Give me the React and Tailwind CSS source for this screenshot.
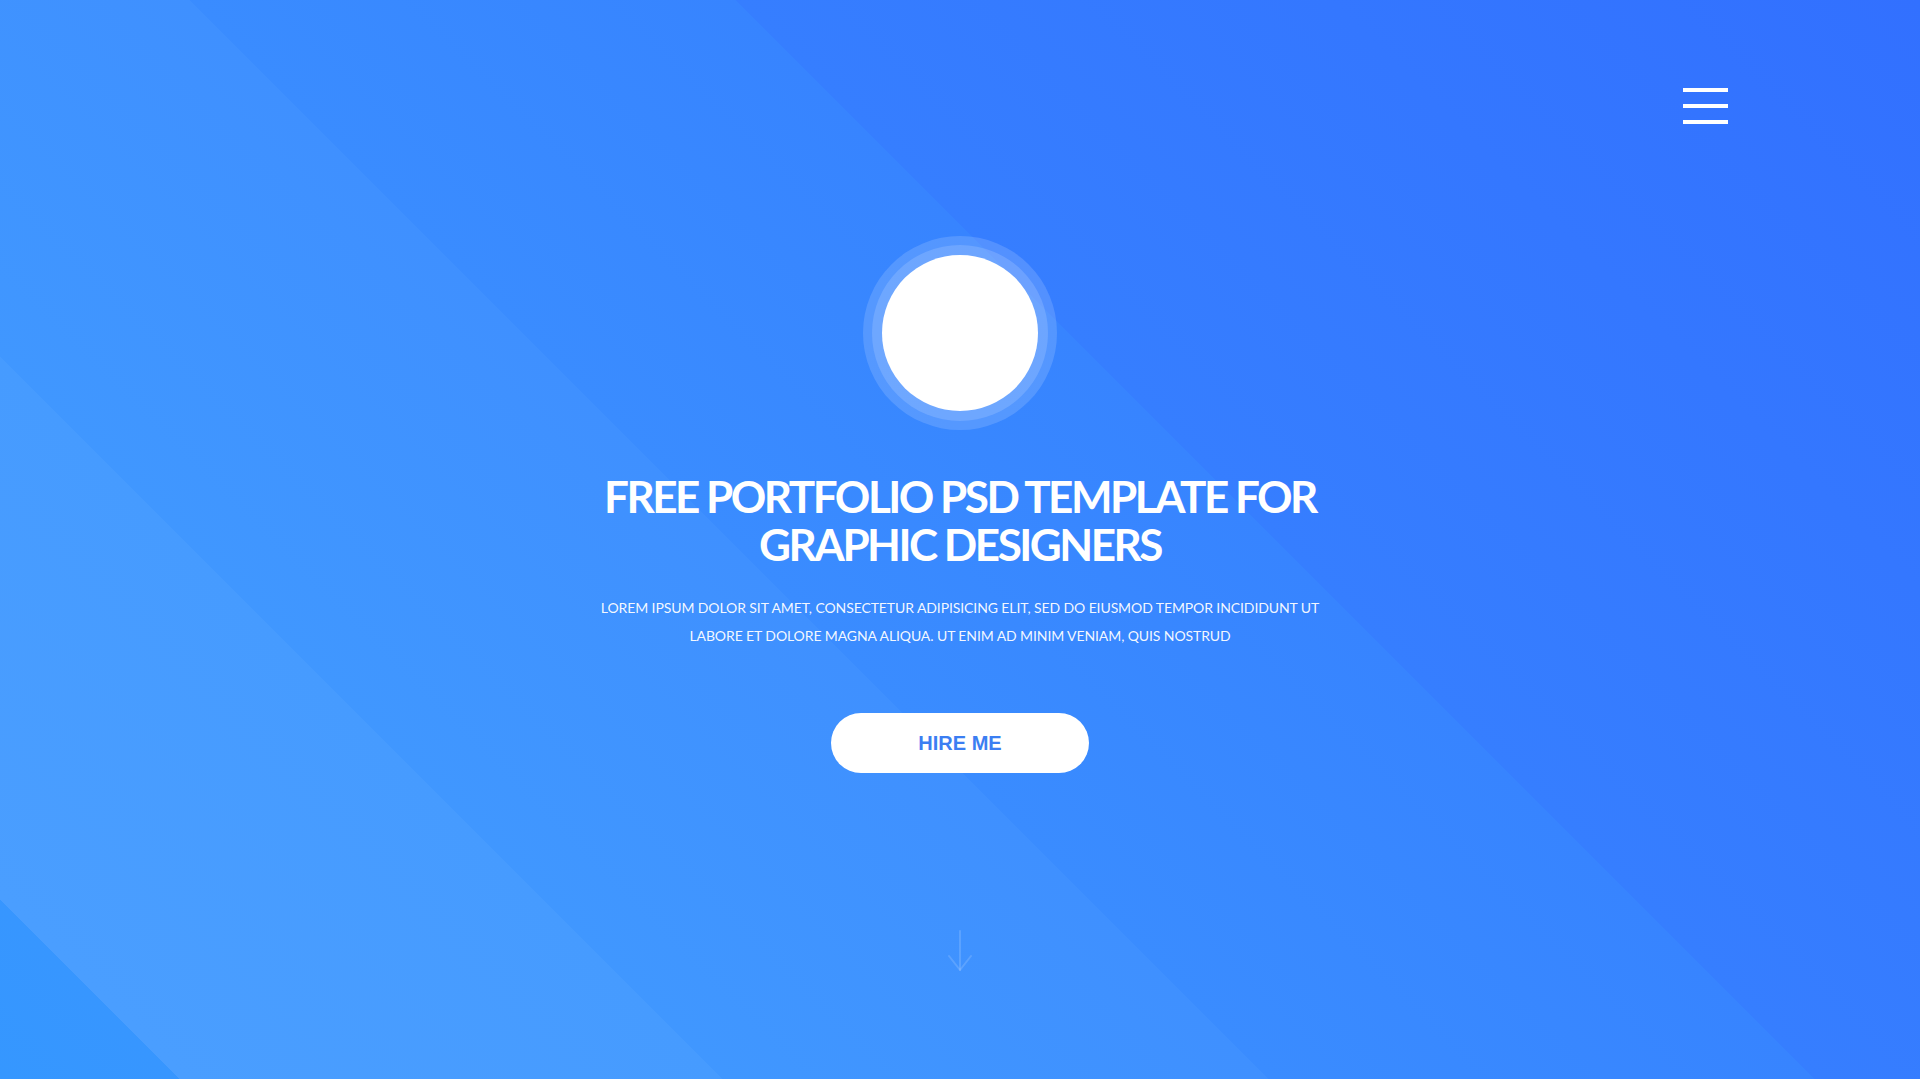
import React from "react";

export default function App() {
  return (
    <div className="relative h-[1079px] w-full overflow-hidden bg-[linear-gradient(45deg,#3597ff_0%,#3796ff_6%,#4a9eff_6%,#469bff_24.1%,#4097ff_24.1%,#3f90ff_42.3%,#3a8cff_42.3%,#3784ff_60.5%,#367eff_60.5%,#3270ff_100%)] font-['Lato',sans-serif]">
      <header className="flex justify-end pt-[88px] pr-[192px]">
        <button className="flex w-[45px] flex-col gap-[12px]" aria-label="Menu">
          <span className="block h-[4px] w-full bg-white" />
          <span className="block h-[4px] w-full bg-white" />
          <span className="block h-[4px] w-full bg-white" />
        </button>
      </header>

      <main className="flex flex-col items-center">
        <div className="mt-[112px] flex h-[194px] w-[194px] items-center justify-center rounded-full bg-white/15">
          <div className="flex h-[176px] w-[176px] items-center justify-center rounded-full bg-white/15">
            <div className="h-[156px] w-[156px] rounded-full bg-white" />
          </div>
        </div>

        <h1 className="mt-[42px] text-center text-[44px] font-bold leading-[48px] tracking-[-2.5px] text-white">
          <span className="block">FREE PORTFOLIO PSD TEMPLATE FOR</span>
          <span className="block">GRAPHIC DESIGNERS</span>
        </h1>

        <p className="mt-[26px] text-center text-[14px] leading-[28px] tracking-[-0.1px] text-white/95">
          <span className="block">LOREM IPSUM DOLOR SIT AMET, CONSECTETUR ADIPISICING ELIT, SED DO EIUSMOD TEMPOR INCIDIDUNT UT</span>
          <span className="block">LABORE ET DOLORE MAGNA ALIQUA. UT ENIM AD MINIM VENIAM, QUIS NOSTRUD</span>
        </p>

        <button className="mt-[63px] flex h-[60px] w-[258px] items-center justify-center rounded-full bg-white font-['Liberation_Sans',Arial,sans-serif] text-[20px] font-bold text-[#3b7ef2]">
          HIRE ME
        </button>

        <svg
          className="mt-[157px]"
          width="26"
          height="42"
          viewBox="0 0 26 42"
          fill="none"
          stroke="white"
          strokeOpacity="0.15"
          strokeWidth="2"
          strokeLinecap="round"
          strokeLinejoin="round"
        >
          <path d="M13 1 V40" />
          <path d="M2 26 L13 40 L24 26" />
        </svg>
      </main>
    </div>
  );
}
